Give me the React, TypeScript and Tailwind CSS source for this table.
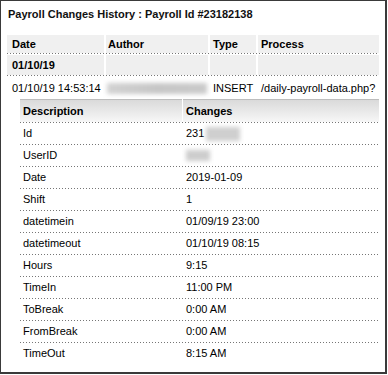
import React from "react";

interface Change {
  field: string;
  value: React.ReactNode;
}

// dotted rule used under every row
const Dots = () => (
  <div className="h-px bg-[image:repeating-linear-gradient(to_right,#767676_0_1px,transparent_1px_3px)]" />
);

const Hidden = ({ className }: { className: string }) => (
  <span className={`inline-block blur-[2px] ${className}`} />
);

const changes: Change[] = [
  {
    field: "Id",
    value: (
      <span className="flex items-center">
        231
        <Hidden className="ml-[2px] w-[34px] h-[14px] bg-[#cfcfcf]" />
      </span>
    ),
  },
  { field: "UserID", value: <Hidden className="w-[24px] h-[11px] bg-[#cdcdcd]" /> },
  { field: "Date", value: "2019-01-09" },
  { field: "Shift", value: "1" },
  { field: "datetimein", value: "01/09/19 23:00" },
  { field: "datetimeout", value: "01/10/19 08:15" },
  { field: "Hours", value: "9:15" },
  { field: "TimeIn", value: "11:00 PM" },
  { field: "ToBreak", value: "0:00 AM" },
  { field: "FromBreak", value: "0:00 AM" },
  { field: "TimeOut", value: "8:15 AM" },
];

const cols = "grid grid-cols-[97px_102px_46px_121px] gap-x-[2px]";

export default function App() {
  return (
    <div className="w-[387px] h-[374px] bg-white border-l border-t border-r-2 border-b-2 border-[#3a3a3a] font-['Liberation_Sans',Arial,sans-serif] text-[11px] text-black">
      <div className="h-[26px] flex items-center pl-[7px] font-bold text-[#111]">
        Payroll Changes History : Payroll Id #23182138
      </div>

      <div className="ml-[6px] mt-[8px] w-[372px]">
        {/* header */}
        <div className={`${cols} h-[18px] font-bold`}>
          <div className="bg-[#f0f0f0] flex items-center pl-[5px]">Date</div>
          <div className="bg-[#f0f0f0] flex items-center pl-[2px]">Author</div>
          <div className="bg-[#f0f0f0] flex items-center pl-[3px]">Type</div>
          <div className="bg-[#f0f0f0] flex items-center pl-[3px]">Process</div>
        </div>
        <Dots />

        {/* day group */}
        <div className={`${cols} h-[20px] mt-px font-bold`}>
          <div className="bg-[#efefef] flex items-center pl-[5px]">01/10/19</div>
          <div className="bg-[#efefef]" />
          <div className="bg-[#efefef]" />
          <div className="bg-[#efefef]" />
        </div>
        <Dots />

        {/* entry */}
        <div className={`${cols} h-[20px] mt-[2px]`}>
          <div className="flex items-center pl-[5px]">01/10/19 14:53:14</div>
          <div className="flex items-center pl-px">
            <Hidden className="w-[100px] h-[11px] bg-linear-to-r from-[#d2d2d2] via-[#c6c6c6] to-[#cacaca]" />
          </div>
          <div className="flex items-center pl-[3px]">INSERT</div>
          <div className="flex items-center pl-[3px] whitespace-nowrap">/daily-payroll-data.php?</div>
        </div>

        {/* changed fields */}
        <div className="ml-[13px] w-[359px] mt-px">
          <div className="grid grid-cols-[162px_196px] gap-x-px h-[23px] font-bold">
            <div className="border-t border-[#bdbdbd] bg-linear-to-b from-[#dadada] to-[#f7f7f7] flex items-center pl-[3px]">
              Description
            </div>
            <div className="border-t border-[#bdbdbd] bg-linear-to-b from-[#dadada] to-[#f7f7f7] flex items-center pl-[3px]">
              Changes
            </div>
          </div>
          <Dots />
          {changes.map((c, i) => (
            <div key={c.field}>
              <div className="grid grid-cols-[163px_196px] h-[21px]">
                <div className="flex items-center pl-[3px]">{c.field}</div>
                <div className="flex items-center pl-[3px]">{c.value}</div>
              </div>
              {i < changes.length - 1 && <Dots />}
            </div>
          ))}
        </div>
      </div>
    </div>
  );
}
